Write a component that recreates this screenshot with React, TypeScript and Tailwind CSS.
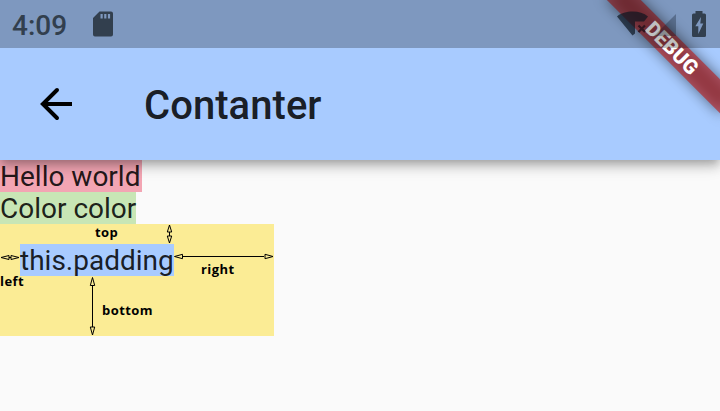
import React from "react";

function StatusBar() {
  return (
    <div className="absolute inset-x-0 top-0 z-30 flex h-12 items-center bg-black/25 text-[#323f4e]">
      <span className="ml-3 mt-1 w-[80px] text-[28px] font-medium leading-none">4:09</span>
      <svg className="h-[26px] w-[22px]" viewBox="0 0 22 26" fill="currentColor">
        <path fillRule="evenodd" d="M7.500.5h11.500q2 0 2 2v21q0 2-2 2h-16q-2 0-2-2V7ZM8.500 3v4.500h2.200V3Zm3.700 0v4.500h2.200V3Zm3.700 0v4.500h2.200V3Z" />
      </svg>
      <svg className="ml-auto h-12 w-[110px]" viewBox="610 0 110 48">
        <path d="M617 16.500C624 10.500 640 9.500 648 16.500L644 21.500H635V33.500L632.500 35.500Z" fill="#0a1420" fillOpacity=".69" />
        <path d="m638.500 25.500 6.500 6.500m0-6.500-6.500 6.500" stroke="#31151f" strokeWidth="2.200" />
        <path d="M654 36 676 14V36Z" fill="#0a1420" fillOpacity=".3" />
        <path fillRule="evenodd" d="M695.500 11h7v2.500h2q1.500 0 1.500 1.500v20.500q0 1.500-1.500 1.500H693.500q-1.500 0-1.500-1.500V15q0-1.500 1.500-1.500h2ZM701 17 695.300 26.200h3v7.800l5-10.500h-3Z" fill="#323f4e" />
      </svg>
    </div>
  );
}

function DebugBanner() {
  return (
    <div className="absolute right-0 top-0 z-20 h-0 w-0 rotate-45">
      <div className="absolute left-[-80px] top-[56px] h-6 w-40">
        <div className="absolute inset-0 bg-black/50 blur-[7px]" />
        <div className="relative flex h-full items-center justify-center bg-[#b71c1c]/63 text-[20.4px] font-black leading-none text-white">
          DEBUG
        </div>
      </div>
    </div>
  );
}

function AppBar() {
  return (
    <header className="relative z-10 flex h-40 items-center bg-[#a8cbff] pl-8 pt-12 shadow-[0_4px_8px_-2px_rgba(0,0,0,0.2),0_8px_10px_rgba(0,0,0,0.14),0_2px_20px_rgba(0,0,0,0.12)]">
      <svg className="h-12 w-12" viewBox="32 80 48 48" fill="none" stroke="black" strokeWidth="4">
        <path d="M57 90 42.900 104 57 118" strokeLinecap="round" />
        <path d="M43 104H72" />
      </svg>
      <h1 className="ml-16 mt-1 text-[40px] font-medium leading-none tracking-[0.05px] text-black/87">Contanter</h1>
    </header>
  );
}

function PaddingDiagram() {
  return (
    <div className="relative h-28 w-[274px] bg-[#fbec95] pl-5 pt-5">
      <div className="h-8 w-[154px] whitespace-nowrap bg-[#a8cbff] pt-px">this.padding</div>
      <svg className="absolute inset-0 h-28 w-[274px]" viewBox="0 224 274 112">
        <g fill="none" stroke="black">
          <path d="M169.500 225V243M92.500 286V327M183 256.500H264M6 257.500H14" />
          <g fill="#fbec95">
            <path d="m169.500 225-2.200 7h4.400ZM169.500 243l-2.200-7h4.400ZM92.500 277.500l-2.200 8h4.400ZM92.500 335l-2.200-8h4.400ZM174.500 256.500l8-2.200v4.400ZM273 256.500l-8-2.200v4.400ZM1 257.500l8-2v4ZM19 257.500l-8-2v4Z" />
          </g>
        </g>
        <g className="font-['Open_Sans',sans-serif] text-[13px] font-bold tracking-[0.45px]" fill="black">
          <text x="95" y="237">top</text>
          <text x="0" y="286">left</text>
          <text x="201" y="274">right</text>
          <text x="102" y="315">bottom</text>
        </g>
      </svg>
    </div>
  );
}

export default function App() {
  return (
    <div className="relative h-[411px] w-[720px] overflow-hidden bg-[#fafafa] font-['Roboto',sans-serif]">
      <AppBar />
      <DebugBanner />
      <StatusBar />
      <main className="flex flex-col items-start text-[28px] leading-8 text-black/87">
        <div className="h-8 w-[142px] whitespace-nowrap bg-[#f3a5b3] pt-px">Hello world</div>
        <div className="h-8 w-[136px] whitespace-nowrap bg-[#c8e6b5] pt-px">Color color</div>
        <PaddingDiagram />
      </main>
    </div>
  );
}
